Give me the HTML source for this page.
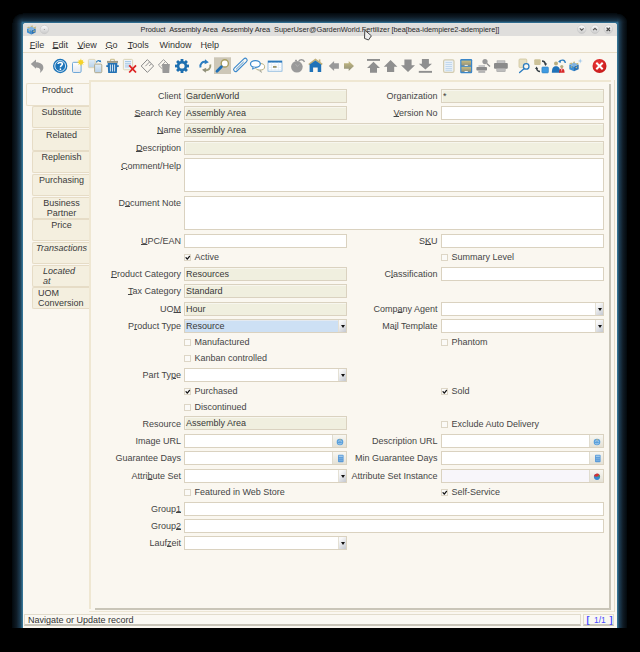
<!DOCTYPE html><html><head><meta charset="utf-8"><style>
html,body{margin:0;padding:0;width:640px;height:652px;background:#000;overflow:hidden}
body{position:relative;-webkit-font-smoothing:antialiased;font-family:"Liberation Sans",sans-serif;font-size:9px;color:#3a3a3a}
.a{position:absolute}
#win{position:absolute;left:23px;top:23px;width:594px;height:605px;background:#faf7f0;border-radius:3px 3px 0 0;overflow:hidden}
#title{position:absolute;left:23px;top:23px;width:594px;height:13px;background:linear-gradient(#e6e5e3,#dfdedc 2px,#dfdedc);border-radius:3px 3px 0 0}
.mi{position:absolute;top:39.5px;font-size:9px;color:#333;line-height:10px}
.u{text-decoration:underline;text-underline-offset:-0.3px;text-decoration-thickness:1px}
.lbl{position:absolute;text-align:right;white-space:nowrap;line-height:14px;height:14px;color:#454545}
.f{position:absolute;box-sizing:border-box;height:14px;border:1px solid #dad2c0;background:#fff;line-height:12px;padding-left:1px;white-space:nowrap;color:#383838}
.ro{background:#f0efdf;box-shadow:inset 1px 1px 0 #f7f6ee}
.pt{background:#cde0f4;box-shadow:inset 0 1px 0 #e3e9f0}
.asi{background:#f8f6fa}
.cb{position:absolute;box-sizing:border-box;width:7px;height:7px;border:1px solid #ddd6c6;background:#fbfaf7}
.cbt{position:absolute;line-height:12px;white-space:nowrap;color:#454545}
.tab{position:absolute;left:32px;width:58px;height:22px;box-sizing:border-box;border:1px solid #e6dcc6;border-right:none;border-radius:2px 0 0 2px;background:#f4efdf;text-align:center;line-height:10px;padding-top:0px;color:#3a3a3a}
.combo{position:absolute;right:0;top:0;width:7.5px;height:12px;background:linear-gradient(135deg,#f8f8f8 20%,#c4c8d0);border-left:1px solid #e4e0d4}
.combo:after{content:"";position:absolute;left:2.3px;top:4.5px;border-left:2.6px solid transparent;border-right:2.6px solid transparent;border-top:3px solid #111}
.btn{position:absolute;right:0;top:0;width:13px;height:12px;background:linear-gradient(#f8f7f2,#e4e1d6);border-left:1px solid #e0dccf}
.tb{position:absolute;top:58px}
</style></head><body>
<div class="a" style="left:12.4px;top:23px;width:10.6px;height:605px;background:linear-gradient(90deg,#02080c,#0f1b25 40%,#1d3c52 75%,#3a80a3)"></div>
<div class="a" style="left:617px;top:23px;width:10.4px;height:605px;background:linear-gradient(270deg,#02080c,#0f1b25 40%,#1d3c52 75%,#3a80a3)"></div>
<div class="a" style="left:23px;top:13.4px;width:594px;height:9.6px;background:linear-gradient(180deg,#02080c,#0e1a24 40%,#183448 75%,#2f6b8e)"></div>
<div class="a" style="left:12.4px;top:13.4px;width:10.6px;height:9.6px;background:radial-gradient(10.6px 9.6px at 100% 100%,#357599 0,#1b394e 25%,#0f1b25 60%,#02080c 97%,#000 100%)"></div>
<div class="a" style="left:617px;top:13.4px;width:10.4px;height:9.6px;background:radial-gradient(10.4px 9.6px at 0% 100%,#357599 0,#1b394e 25%,#0f1b25 60%,#02080c 97%,#000 100%)"></div>
<div class="a" style="left:22px;top:22px;width:596px;height:8px;background:#2f6b8e"></div>
<div id="win"></div>
<div id="title"></div>
<svg class="a" style="left:0;top:0" width="640" height="80" viewBox="0 0 640 80">
<defs>
<linearGradient id="gdoc" x1="0" y1="0" x2="0" y2="1"><stop offset="0" stop-color="#ffffff"/><stop offset="1" stop-color="#e4e8ee"/></linearGradient>
<linearGradient id="gblue" x1="0" y1="0" x2="0" y2="1"><stop offset="0" stop-color="#e2eef8"/><stop offset="1" stop-color="#b6d0e8"/></linearGradient>
<linearGradient id="golive" x1="0" y1="0" x2="0" y2="1"><stop offset="0" stop-color="#c9bd80"/><stop offset="1" stop-color="#8f8f7a"/></linearGradient>
<linearGradient id="gtbtn" x1="0" y1="0" x2="0" y2="1"><stop offset="0" stop-color="#fbfbfb"/><stop offset="1" stop-color="#c9c9c9"/></linearGradient>
<radialGradient id="gred" cx="0.4" cy="0.35" r="0.7"><stop offset="0" stop-color="#ee3b3b"/><stop offset="1" stop-color="#c41818"/></radialGradient>
</defs>
<circle cx="44.4" cy="29.5" r="4.2" fill="url(#gtbtn)" stroke="#c4c4c4" stroke-width="0.6"/>
<circle cx="44.4" cy="29.5" r="0.6" fill="#999"/>
<circle cx="581.7" cy="29.3" r="4.2" fill="url(#gtbtn)" stroke="#c4c4c4" stroke-width="0.6"/>
<circle cx="595.0" cy="29.3" r="4.2" fill="url(#gtbtn)" stroke="#c4c4c4" stroke-width="0.6"/>
<circle cx="608.3" cy="29.3" r="4.2" fill="url(#gtbtn)" stroke="#c4c4c4" stroke-width="0.6"/>
<path d="M579.8 28.4 L581.7 30.3 L583.6 28.4" stroke="#555" stroke-width="1.1" fill="none"/>
<path d="M593.1 30.2 L595 28.3 L596.9 30.2" stroke="#555" stroke-width="1.1" fill="none"/>
<path d="M606.6 27.6 L610 31 M610 27.6 L606.6 31" stroke="#444" stroke-width="1.2" fill="none"/>
<path d="M27 28.6 L31.3 30.6 L31.3 34.4 L27 32.4 Z" fill="#3d8ed2"/>
<path d="M31.3 30.6 L35.6 28.6 L35.6 32.4 L31.3 34.4 Z" fill="#2a72b6"/>
<path d="M27 28.6 L31.3 26.6 L35.6 28.6 L31.3 30.6 Z" fill="#7fb2e0"/>
<path d="M26.6 27.6 L29.2 26.4 L30 28.4 Z M30.2 26 L33 25.4 L32.4 27.4 Z M33.2 27.4 L36.2 26.6 L35.2 29.2 Z M28 30 L30.4 30.4 L29.4 32 Z M32.6 31 L35 30.2 L34.4 32.4 Z" fill="#c2b57a"/>
<path d="M30.8 64.1 L36 59.4 L36 62.2 C40.5 62.2 44 64.5 43.3 68.5 C42.8 70.5 41.5 72 39.9 72.9 C40.8 70.5 41 67.6 36 67.4 L36 68.8 Z" fill="#9a9a9a"/>
<circle cx="60.2" cy="66" r="7.2" fill="#1b74b9"/>
<circle cx="60.2" cy="66" r="5.4" fill="none" stroke="#ffffff" stroke-width="0.9" opacity="0.9"/>
<path d="M58 63.9 C58 62 62.4 62 62.4 64 C62.4 65.3 60.4 65.6 60.4 67.3" stroke="#fff" stroke-width="1.5" fill="none"/>
<circle cx="60.4" cy="69.2" r="0.85" fill="#fff"/>
<rect x="72.5" y="62.3" width="8.6" height="10.2" rx="1.2" fill="url(#gdoc)" stroke="#6fa8d8" stroke-width="1"/>
<circle cx="80.8" cy="62.3" r="2.4" fill="#f5d32a"/>
<path d="M80.8 58.8 V65.8 M77.3 62.3 H84.3 M78.4 59.9 L83.2 64.7 M83.2 59.9 L78.4 64.7" stroke="#f5d32a" stroke-width="0.7"/>
<rect x="88.4" y="59.4" width="6.8" height="8.3" rx="1" fill="url(#gblue)" stroke="#ddd4b4" stroke-width="0.9"/>
<rect x="94.6" y="64.1" width="7.2" height="8.6" rx="1" fill="url(#gblue)" stroke="#b0a88a" stroke-width="1"/>
<path d="M96.5 62.5 C96.5 60.5 99 60 100 61.8" stroke="#2a7cc0" stroke-width="1.2" fill="none"/><path d="M99 61.5 L101.3 62.4 L100.6 60" fill="#2a7cc0"/>
<path d="M110.6 61 V59.3 H114.3 V61" stroke="#c8bc88" stroke-width="1" fill="none"/>
<rect x="107" y="60.9" width="11" height="2" fill="#9a9a8a"/>
<path d="M107.6 63 H117.4 L116.8 72.9 H108.2 Z" fill="#2472b4"/>
<rect x="106" y="65.3" width="13" height="1.6" rx="0.8" fill="#2472b4"/>
<path d="M110.4 64.5 V71.5 M112.5 64.5 V71.5 M114.6 64.5 V71.5" stroke="#fff" stroke-width="0.8"/>
<rect x="123.4" y="59.4" width="9.2" height="10.4" rx="1" fill="#eef3f8" stroke="#d8d0b0" stroke-width="0.9"/>
<path d="M125 61.5 H131 M125 63.3 H131 M125 65.1 H131 M125 66.9 H129" stroke="#8ab8e0" stroke-width="0.7"/>
<path d="M129.2 65.3 L136 72.5 M136 65.3 L129.2 72.5" stroke="#dd2222" stroke-width="1.8"/>
<path d="M147.4 59.6 L153.6 66 L147.4 72.4 L141.2 66 Z" fill="none" stroke="#8a8a8a" stroke-width="1"/>
<path d="M149.6 61.9 L145.4 66.2 M151.4 63.8 L149.2 66" stroke="#8a8a8a" stroke-width="0.9"/>
<path d="M163.5 59.6 L168 64 M163.5 59.6 L158.4 65 L162 68.6" fill="none" stroke="#9a9a9a" stroke-width="1"/>
<path d="M165.4 61.6 L161.6 65.6" stroke="#9a9a9a" stroke-width="0.9"/>
<path d="M162 64 H169.8 L169.2 72.9 H162.6 Z" fill="#999"/>
<rect x="186.20" y="64.60" width="2.8" height="2.8" transform="rotate(0 187.60 66.00)" fill="#1d6fb0"/><rect x="184.56" y="68.56" width="2.8" height="2.8" transform="rotate(45 185.96 69.96)" fill="#1d6fb0"/><rect x="180.60" y="70.20" width="2.8" height="2.8" transform="rotate(90 182.00 71.60)" fill="#1d6fb0"/><rect x="176.64" y="68.56" width="2.8" height="2.8" transform="rotate(135 178.04 69.96)" fill="#1d6fb0"/><rect x="175.00" y="64.60" width="2.8" height="2.8" transform="rotate(180 176.40 66.00)" fill="#1d6fb0"/><rect x="176.64" y="60.64" width="2.8" height="2.8" transform="rotate(225 178.04 62.04)" fill="#1d6fb0"/><rect x="180.60" y="59.00" width="2.8" height="2.8" transform="rotate(270 182.00 60.40)" fill="#1d6fb0"/><rect x="184.56" y="60.64" width="2.8" height="2.8" transform="rotate(315 185.96 62.04)" fill="#1d6fb0"/>
<circle cx="182" cy="66" r="5.2" fill="#1d6fb0"/><circle cx="182" cy="66" r="2.6" fill="#faf7f0"/>
<path d="M200.5 67.5 C199.8 63.5 202.5 61.2 206 62" stroke="#2a7cc0" stroke-width="1.9" fill="none"/><path d="M205 59.3 L208.8 62.3 L204.6 64.3 Z" fill="#2a7cc0"/>
<path d="M210.3 64.5 C211 68.5 208.3 70.8 204.8 70" stroke="#9a9a7a" stroke-width="1.9" fill="none"/><path d="M205.8 72.7 L202 69.7 L206.2 67.7 Z" fill="#8f8f7a"/>
<rect x="214" y="57" width="17" height="17" fill="#cdc7b7"/>
<rect x="214" y="57" width="17" height="0.8" fill="#ddd8cc"/>
<circle cx="224.8" cy="63.4" r="3.6" fill="#fff" stroke="#a99f62" stroke-width="1.4"/>
<path d="M221.4 66.8 L217 71.2" stroke="#1f6fb4" stroke-width="2.8" stroke-linecap="round"/>
<path d="M235.6 69.6 L245.2 60.2" stroke="#3a88cc" stroke-width="5" stroke-linecap="round"/>
<path d="M235.6 69.6 L245.2 60.2" stroke="#faf7f0" stroke-width="2.8" stroke-linecap="round"/>
<path d="M236.2 69.2 L243.4 62.2" stroke="#3a88cc" stroke-width="0.9" stroke-linecap="round"/>
<ellipse cx="260" cy="66.8" rx="4.6" ry="3.3" fill="#fff" stroke="#b8b080" stroke-width="1"/>
<path d="M258.5 70 L261.5 72.4 L260 69.6" fill="#fff" stroke="#a0a090" stroke-width="0.8"/>
<ellipse cx="255.4" cy="64" rx="4.9" ry="3.4" fill="#fff" stroke="#3a88cc" stroke-width="1.2"/>
<path d="M253.2 67 L252.5 69.2 L256 67.3" fill="#fff" stroke="#3a88cc" stroke-width="1"/>
<rect x="268" y="61" width="14" height="10.2" fill="#fff" stroke="#7ab0dc" stroke-width="0.8"/>
<rect x="268" y="60.8" width="14" height="1.8" fill="#2b78bb"/>
<path d="M268 65 H282 M268 67.4 H282 M268 69.6 H282 M271.5 62.5 V71 M275 62.5 V71 M278.5 62.5 V71" stroke="#d8e6f2" stroke-width="0.5"/>
<rect x="273" y="66" width="3.6" height="1.8" fill="#9c9468"/>
<circle cx="296.9" cy="66.8" r="5.8" fill="#9a9a9a"/>
<path d="M298.5 61.5 C300 59 303.5 59 304.5 62" stroke="#9a9a9a" stroke-width="1.4" fill="none"/><rect x="295" y="59.8" width="2" height="1.6" fill="#a0a0a0"/>
<path d="M295.5 64 L297 66.5 L299.5 64.5" stroke="#b4b4b4" stroke-width="0.7" fill="none"/>
<path d="M308.8 64.6 L315.4 59.6 L322.2 64.6" stroke="#c0b07a" stroke-width="1.8" fill="none"/><rect x="318.8" y="59.4" width="1.6" height="2.6" fill="#c0b07a"/>
<path d="M309.6 64.5 L315.4 60.6 L321.2 64.5 V72.1 H317.7 V67.6 H313.1 V72.1 H309.6 Z" fill="#1f72b8"/>
<path d="M328.8 66.1 L334.1 61 V63.2 H338.9 V68.8 H334.1 V70.9 Z" fill="#999"/>
<path d="M354 66.1 L348.7 61 V63.2 H344 V68.8 H348.7 V70.9 Z" fill="url(#golive)"/>
<rect x="367" y="59" width="13" height="1.9" fill="#8f8f8f"/>
<path d="M367 68 L373.5 61.8 L380 68 H377 V72.8 H370 V68 Z" fill="#8f8f8f"/>
<path d="M383.8 66.8 L390.6 60 L397.4 66.8 H394.2 V72 H387 V66.8 Z" fill="#8f8f8f"/>
<path d="M401 65.2 L408 72 L415 65.2 H411.6 V59.6 H404.4 V65.2 Z" fill="#8f8f8f"/>
<path d="M418.8 63.7 L425.4 69.6 L432 63.7 H428.9 V59 H421.9 V63.7 Z" fill="#8f8f8f"/>
<rect x="418.8" y="70.9" width="13.2" height="1.9" fill="#8f8f8f"/>
<rect x="443.6" y="59.8" width="10.4" height="12.6" rx="1.4" fill="#e8f0f8" stroke="#d4ccb0" stroke-width="1.2"/>
<path d="M445.5 62.5 H452 M445.5 64.5 H452 M445.5 66.5 H452 M445.5 68.5 H452 M445.5 70.3 H452" stroke="#b8d2ea" stroke-width="0.8"/>
<rect x="460.2" y="59" width="12" height="14.2" rx="1.2" fill="#3a86c8"/>
<rect x="461.4" y="60.6" width="9.6" height="5" fill="url(#golive)"/><rect x="461.4" y="66.8" width="9.6" height="5" fill="url(#golive)"/>
<rect x="464.6" y="64.9" width="3.2" height="0.9" fill="#fff"/><rect x="464.6" y="71" width="3.2" height="0.9" fill="#fff"/>
<rect x="478.5" y="65" width="6.5" height="2.5" fill="#c8c8c8"/>
<rect x="476.4" y="67" width="10.6" height="3.6" rx="0.8" fill="#8a8a8a"/>
<rect x="478.3" y="70.3" width="6.9" height="2.6" fill="#b4b4b4"/>
<circle cx="485" cy="61.6" r="2.6" fill="#999"/><path d="M486.8 63.5 L490 66.5" stroke="#8a8a8a" stroke-width="1.2"/>
<rect x="497" y="60.8" width="8" height="2.6" fill="#c4c4c4" stroke="#9a9a9a" stroke-width="0.5"/>
<rect x="494" y="63" width="13.8" height="5.8" rx="1" fill="#8a8a8a"/>
<rect x="496.8" y="68.2" width="8.4" height="3.5" fill="#bcbcbc" stroke="#9a9a9a" stroke-width="0.5"/>
<rect x="519" y="59" width="7.8" height="8.6" rx="1" fill="#e6e0c4" stroke="#d0c59c" stroke-width="0.8"/>
<circle cx="526.2" cy="66.4" r="2.8" fill="#faf7f0" stroke="#2a7cc0" stroke-width="1.3"/>
<path d="M524 68.8 L519.6 72.6" stroke="#2a7cc0" stroke-width="1.3" stroke-linecap="round"/>
<rect x="534.2" y="59.3" width="6.5" height="5.6" rx="1" fill="#cdc298"/>
<rect x="541.9" y="67" width="6.5" height="5.9" rx="0.8" fill="#3f9ae0" stroke="#2a7cc0" stroke-width="0.6"/>
<path d="M542 61 C544 61 545 62 545.5 64" stroke="#333d44" stroke-width="1.3" fill="none"/><path d="M544 63.5 L545.5 66 L547.2 63.5Z" fill="#333d44"/>
<path d="M540 71.5 C538 71.5 537 70.5 536.5 68.5" stroke="#333d44" stroke-width="1.3" fill="none"/><path d="M535 69 L536.5 66.5 L538.2 69Z" fill="#333d44"/>
<circle cx="556" cy="63.6" r="2" fill="#b8ad80"/>
<path d="M551.8 72.7 C552 67.5 553.5 66.3 556 66.3 C558.5 66.3 560 67.5 560.2 72.7 Z" fill="#1f72b8"/>
<circle cx="561.8" cy="66.6" r="1.6" fill="#b8ad80"/>
<path d="M559 72.7 C559.2 69.5 560.2 68.6 561.8 68.6 C563.4 68.6 564.4 69.5 564.6 72.7 Z" fill="#d82828"/>
<path d="M561.3 69 L561.8 72 L562.3 69" fill="#fff"/>
<path d="M559.5 61.5 C561 59.5 565 59.5 565.3 63" stroke="#2a7cc0" stroke-width="1.3" fill="none"/><path d="M558 61.8 L560.8 59.8 L560.6 63 Z" fill="#2a7cc0"/>
<path d="M569.3 64.6 L574 66.6 L574 71.2 L569.3 69.2 Z" fill="#3d8ed2"/>
<path d="M574 66.6 L578.7 64.6 L578.7 69.2 L574 71.2 Z" fill="#2a72b6"/>
<path d="M569.3 64.6 L574 62.4 L578.7 64.6 L574 66.6 Z" fill="#7fb2e0"/>
<path d="M569 63.5 L571.5 62.6 L572.5 64.4 Z M572.5 62 L575 61.6 L574.6 63.4 Z M575.8 63.4 L578.6 62.8 L577.6 65 Z M570.4 66.2 L572.6 66.4 L571.6 68 Z M575.2 67.2 L577.4 66.4 L576.8 68.6 Z" fill="#c2b57a"/>
<path d="M580.2 58.4 L580.8 60.4 L582.8 61 L580.8 61.6 L580.2 63.6 L579.6 61.6 L577.6 61 L579.6 60.4 Z" fill="#9cc6ea"/>
<circle cx="599.5" cy="66" r="7" fill="url(#gred)"/>
<path d="M596.3 62.8 L602.7 69.2 M602.7 62.8 L596.3 69.2" stroke="#fff" stroke-width="2"/>
<path d="M364.8 30.2 L364.5 38.4 L368.5 40 L371.4 35.8 Z" fill="#eeeeee" stroke="#333" stroke-width="0.9" stroke-linejoin="round"/>
</svg>
<div class="a" style="left:140.5px;top:25px;font-size:7.4px;line-height:9px;color:#2a2a2a;white-space:nowrap;letter-spacing:-0.05px">Product&nbsp; Assembly Area&nbsp; Assembly Area&nbsp; SuperUser@GardenWorld.Fertilizer [bea[bea-idempiere2-adempiere]]</div>
<span class="mi" style="left:29.8px"><span class="u">F</span>ile</span>
<span class="mi" style="left:52.5px"><span class="u">E</span>dit</span>
<span class="mi" style="left:77.5px"><span class="u">V</span>iew</span>
<span class="mi" style="left:105.6px"><span class="u">G</span>o</span>
<span class="mi" style="left:127.7px"><span class="u">T</span>ools</span>
<span class="mi" style="left:159.6px">Window</span>
<span class="mi" style="left:200.4px"><span class="u">H</span>elp</span>
<div class="a" style="left:23px;top:52px;width:594px;height:1px;background:#e6dcc6"></div>
<div class="a" style="left:26px;top:83px;width:64px;height:23px;box-sizing:border-box;border:1px solid #e8dfca;border-right:none;border-radius:2px 0 0 2px;background:#faf7f0;text-align:center;line-height:10px;padding-top:1px;padding-right:2px">Product</div>
<div class="tab" style="top:106px;">Substitute</div>
<div class="tab" style="top:128.7px;">Related</div>
<div class="tab" style="top:151.3px;">Replenish</div>
<div class="tab" style="top:174px;">Purchasing</div>
<div class="tab" style="top:196.6px;">Business<br>Partner</div>
<div class="tab" style="top:219.2px;">Price</div>
<div class="tab" style="top:241.8px;"><i>Transactions</i></div>
<div class="tab" style="top:264.5px;text-align:left;padding-left:10px;"><i>Located<br>at</i></div>
<div class="tab" style="top:287.2px;text-align:left;padding-left:5px;">UOM<br>Conversion</div>
<div class="a" style="left:89px;top:80px;width:522px;height:529px;box-sizing:border-box;border-left:2px solid #efe7d2;border-top:2px solid #efe7d2;background:#faf7f0"></div>
<div class="a" style="left:95px;top:608px;width:516px;height:2px;background:#c9c5b8"></div>
<div class="a" style="left:609px;top:84px;width:2px;height:526px;background:#c9c5b8"></div>
<div class="a" style="left:89px;top:611px;width:526px;height:1px;background:#ede6d4"></div>
<div class="a" style="left:614px;top:80px;width:1px;height:532px;background:#e4ddcb"></div>
<div class="lbl" style="left:31px;width:150px;top:89px">Client</div>
<div class="f ro" style="left:184px;width:163px;top:89px;">GardenWorld</div>
<div class="lbl" style="left:287.6px;width:150px;top:89px">Organization</div>
<div class="f ro" style="left:441px;width:163px;top:89px;">*</div>
<div class="lbl" style="left:31px;width:150px;top:106px"><span class="u">S</span>earch Key</div>
<div class="f ro" style="left:184px;width:163px;top:106px;">Assembly Area</div>
<div class="lbl" style="left:287.6px;width:150px;top:106px"><span class="u">V</span>ersion No</div>
<div class="f " style="left:441px;width:163px;top:106px;"></div>
<div class="lbl" style="left:31px;width:150px;top:123px"><span class="u">N</span>ame</div>
<div class="f ro" style="left:184px;width:420px;top:123px;">Assembly Area</div>
<div class="lbl" style="left:31px;width:150px;top:141px"><span class="u">D</span>escription</div>
<div class="f ro" style="left:184px;width:420px;top:141px;"></div>
<div class="lbl" style="left:31px;width:150px;top:158.5px"><span class="u">C</span>omment/Help</div>
<div class="f " style="left:184px;width:420px;top:158px;height:34px;"></div>
<div class="lbl" style="left:31px;width:150px;top:196px">D<span class="u">o</span>cument Note</div>
<div class="f " style="left:184px;width:420px;top:196px;height:34px;"></div>
<div class="lbl" style="left:31px;width:150px;top:234px"><span class="u">U</span>PC/EAN</div>
<div class="f " style="left:184px;width:163px;top:234px;"></div>
<div class="lbl" style="left:287.6px;width:150px;top:234px">S<span class="u">K</span>U</div>
<div class="f " style="left:441px;width:163px;top:234px;"></div>
<div class="cb" style="left:184px;top:254px"><svg class="a" style="left:-1px;top:-1px" width="7" height="7" viewBox="0 0 7 7"><path d="M2 3.7 L3.3 5.2 L5.5 2.3" stroke="#111" stroke-width="1.25" fill="none" stroke-linecap="round" stroke-linejoin="round"/></svg></div>
<div class="cbt" style="left:194.4px;top:251.2px">Active</div>
<div class="cb" style="left:441px;top:254px"></div>
<div class="cbt" style="left:451.4px;top:251.2px">Summary Level</div>
<div class="lbl" style="left:31px;width:150px;top:267px"><span class="u">P</span>roduct Category</div>
<div class="f ro" style="left:184px;width:163px;top:267px;">Resources</div>
<div class="lbl" style="left:287.6px;width:150px;top:267px">C<span class="u">l</span>assification</div>
<div class="f " style="left:441px;width:163px;top:267px;"></div>
<div class="lbl" style="left:31px;width:150px;top:284px"><span class="u">T</span>ax Category</div>
<div class="f ro" style="left:184px;width:163px;top:284px;">Standard</div>
<div class="lbl" style="left:31px;width:150px;top:302px">UO<span class="u">M</span></div>
<div class="f ro" style="left:184px;width:163px;top:302px;">Hour</div>
<div class="lbl" style="left:287.6px;width:150px;top:302px">Comp<span class="u">a</span>ny Agent</div>
<div class="f " style="left:441px;width:163px;top:302px;"><div class="combo"></div></div>
<div class="lbl" style="left:31px;width:150px;top:319px">P<span class="u">r</span>oduct Type</div>
<div class="f pt" style="left:184px;width:163px;top:319px;">Resource<div class="combo"></div></div>
<div class="lbl" style="left:287.6px;width:150px;top:319px">Ma<span class="u">i</span>l Template</div>
<div class="f " style="left:441px;width:163px;top:319px;"><div class="combo"></div></div>
<div class="cb" style="left:184px;top:339px"></div>
<div class="cbt" style="left:194.4px;top:336.2px">Manufactured</div>
<div class="cb" style="left:441px;top:339px"></div>
<div class="cbt" style="left:451.4px;top:336.2px">Phantom</div>
<div class="cb" style="left:184px;top:355px"></div>
<div class="cbt" style="left:194.4px;top:352.2px">Kanban controlled</div>
<div class="lbl" style="left:31px;width:150px;top:368px">Part Ty<span class="u">p</span>e</div>
<div class="f " style="left:184px;width:163px;top:368px;"><div class="combo"></div></div>
<div class="cb" style="left:184px;top:388px"><svg class="a" style="left:-1px;top:-1px" width="7" height="7" viewBox="0 0 7 7"><path d="M2 3.7 L3.3 5.2 L5.5 2.3" stroke="#111" stroke-width="1.25" fill="none" stroke-linecap="round" stroke-linejoin="round"/></svg></div>
<div class="cbt" style="left:194.4px;top:385.2px">Purchased</div>
<div class="cb" style="left:441px;top:388px"><svg class="a" style="left:-1px;top:-1px" width="7" height="7" viewBox="0 0 7 7"><path d="M2 3.7 L3.3 5.2 L5.5 2.3" stroke="#111" stroke-width="1.25" fill="none" stroke-linecap="round" stroke-linejoin="round"/></svg></div>
<div class="cbt" style="left:451.4px;top:385.2px">Sold</div>
<div class="cb" style="left:184px;top:403.5px"></div>
<div class="cbt" style="left:194.4px;top:400.7px">Discontinued</div>
<div class="lbl" style="left:31px;width:150px;top:416.5px">Resource</div>
<div class="f ro" style="left:184px;width:163px;top:416px;">Assembly Area</div>
<div class="cb" style="left:441px;top:420.5px"></div>
<div class="cbt" style="left:451.4px;top:417.7px">Exclude Auto Delivery</div>
<div class="lbl" style="left:31px;width:150px;top:434px">Image URL</div>
<div class="f " style="left:184px;width:163px;top:434px;"><div class="btn"><svg class="a" style="left:3px;top:2.5px" width="8" height="8" viewBox="0 0 8 8"><circle cx="4" cy="4" r="3.3" fill="#5aa0dc"/><path d="M2 3.5 C3 2.5 5 2.5 6 3.6 M2.3 5.4 C3.5 6.2 5 6 5.8 5" stroke="#cfe3f3" stroke-width="0.7" fill="none"/><path d="M3 1 L5.5 1.6 L4.5 2.6Z" fill="#c0b47c"/></svg></div></div>
<div class="lbl" style="left:287.6px;width:150px;top:434px">Description URL</div>
<div class="f " style="left:441px;width:163px;top:434px;"><div class="btn"><svg class="a" style="left:3px;top:2.5px" width="8" height="8" viewBox="0 0 8 8"><circle cx="4" cy="4" r="3.3" fill="#5aa0dc"/><path d="M2 3.5 C3 2.5 5 2.5 6 3.6 M2.3 5.4 C3.5 6.2 5 6 5.8 5" stroke="#cfe3f3" stroke-width="0.7" fill="none"/><path d="M3 1 L5.5 1.6 L4.5 2.6Z" fill="#c0b47c"/></svg></div></div>
<div class="lbl" style="left:31px;width:150px;top:451px">Guarantee Days</div>
<div class="f " style="left:184px;width:163px;top:451px;"><div class="btn"><svg class="a" style="left:3.5px;top:2px" width="8" height="9" viewBox="0 0 8 9"><rect x="1" y="0.8" width="5.6" height="7.4" rx="0.9" fill="#5a9ad8"/><rect x="1.8" y="1.6" width="4" height="1.5" fill="#9fc8ea"/><path d="M1.8 4.6 H5.8 M1.8 6.3 H5.8" stroke="#9fc8ea" stroke-width="0.5"/></svg></div></div>
<div class="lbl" style="left:287.6px;width:150px;top:451px">Min Guarantee Days</div>
<div class="f " style="left:441px;width:163px;top:451px;"><div class="btn"><svg class="a" style="left:3.5px;top:2px" width="8" height="9" viewBox="0 0 8 9"><rect x="1" y="0.8" width="5.6" height="7.4" rx="0.9" fill="#5a9ad8"/><rect x="1.8" y="1.6" width="4" height="1.5" fill="#9fc8ea"/><path d="M1.8 4.6 H5.8 M1.8 6.3 H5.8" stroke="#9fc8ea" stroke-width="0.5"/></svg></div></div>
<div class="lbl" style="left:31px;width:150px;top:469px">Attri<span class="u">b</span>ute Set</div>
<div class="f " style="left:184px;width:163px;top:469px;"><div class="combo"></div></div>
<div class="lbl" style="left:287.6px;width:150px;top:469px">Attribute Set Instance</div>
<div class="f asi" style="left:441px;width:163px;top:469px;"><div class="btn"><svg class="a" style="left:3px;top:2px" width="8" height="9" viewBox="0 0 8 9"><circle cx="4" cy="4.8" r="3.1" fill="#3a8ad0"/><path d="M4 4.8 L0.9 4.3 A3.1 3.1 0 0 1 6.5 2.9 Z" fill="#d83030"/><path d="M4 4.8 L6.5 2.9 A3.1 3.1 0 0 1 7.1 4.6Z" fill="#5a9a40"/></svg></div></div>
<div class="cb" style="left:184px;top:488.5px"></div>
<div class="cbt" style="left:194.4px;top:485.7px">Featured in Web Store</div>
<div class="cb" style="left:441px;top:488.5px"><svg class="a" style="left:-1px;top:-1px" width="7" height="7" viewBox="0 0 7 7"><path d="M2 3.7 L3.3 5.2 L5.5 2.3" stroke="#111" stroke-width="1.25" fill="none" stroke-linecap="round" stroke-linejoin="round"/></svg></div>
<div class="cbt" style="left:451.4px;top:485.7px">Self-Service</div>
<div class="lbl" style="left:31px;width:150px;top:502px">Group<span class="u">1</span></div>
<div class="f " style="left:184px;width:420px;top:502px;"></div>
<div class="lbl" style="left:31px;width:150px;top:519px">Group<span class="u">2</span></div>
<div class="f " style="left:184px;width:420px;top:519px;"></div>
<div class="lbl" style="left:31px;width:150px;top:536px">Lauf<span class="u">z</span>eit</div>
<div class="f " style="left:184px;width:163px;top:536px;"><div class="combo"></div></div>
<div class="a" style="left:24px;top:614px;width:557px;height:12px;box-sizing:border-box;border:1px solid #e2dccc;border-bottom:2px solid #c8c4b8;background:#faf8f2;line-height:10px;padding-left:3px;color:#333">Navigate or Update record</div>
<div class="a" style="left:583px;top:614px;width:31px;height:12px;box-sizing:border-box;border:1px solid #e2dccc;border-bottom:2px solid #c8c4b8;background:#faf8f2"></div>
<div class="a" style="left:586.5px;top:614.5px;line-height:10px;color:#4a4aff;font-size:9px;font-weight:bold;white-space:pre">[</div>
<div class="a" style="left:594px;top:614.5px;line-height:10px;color:#4a4aff;font-size:8.5px;white-space:pre">1/1</div>
<div class="a" style="left:609.5px;top:614.5px;line-height:10px;color:#4a4aff;font-size:9px;font-weight:bold;white-space:pre">]</div>
</body></html>
